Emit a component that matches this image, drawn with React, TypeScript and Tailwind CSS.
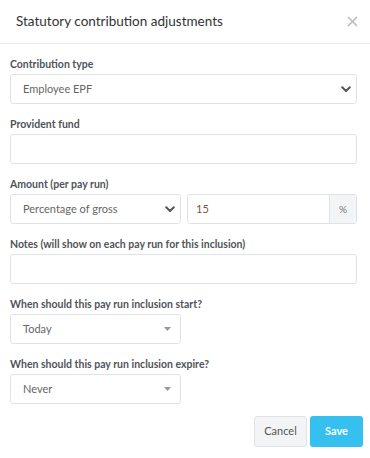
import React from "react";

const font = { fontFamily: "Lato, 'Open Sans', Arial, sans-serif" };

function Chevron() {
  return (
    <svg width="10" height="7" viewBox="0 0 10 7" className="shrink-0">
      <path d="M1.2 1.2 L5 5 L8.8 1.2" fill="none" stroke="#555" strokeWidth="2" strokeLinecap="round" strokeLinejoin="round" />
    </svg>
  );
}

function Caret() {
  return (
    <svg width="7" height="4" viewBox="0 0 7 4" className="shrink-0">
      <path d="M0 0 L7 0 L3.5 4 Z" fill="#999" />
    </svg>
  );
}

function Label({ children }: { children: React.ReactNode }) {
  return <div className="h-5 text-[10.5px] font-bold leading-5 text-[#50545a]">{children}</div>;
}

function SelectBox({ value, width, caret }: { value: string; width: string; caret?: boolean }) {
  return (
    <div
      className={`flex h-[30px] ${width} items-center justify-between rounded-[3px] border border-[#dfe3e8] bg-white pl-[12px] ${
        caret ? "pr-[9px]" : "pr-[5px]"
      } text-[11px] text-[#666]`}
    >
      <span>{value}</span>
      {caret ? <Caret /> : <Chevron />}
    </div>
  );
}

function TextBox() {
  return <div className="h-[30px] w-full rounded-[3px] border border-[#dfe3e8] bg-white" />;
}

export default function App() {
  return (
    <div className="h-[458px] w-[370px] bg-white" style={font}>
      <div className="flex h-[44px] items-center justify-between border-b border-[#e8eaed] pl-4 pr-[12px]">
        <span className="text-[13.5px] text-[#333]">Statutory contribution adjustments</span>
        <svg width="11" height="11" viewBox="0 0 11 11">
          <path d="M1 1 L10 10 M10 1 L1 10" stroke="#bbb" strokeWidth="1.6" />
        </svg>
      </div>

      <div className="flex flex-col gap-[10px] pl-[10px] pr-[13px] pt-[10px]">
        <div>
          <Label>Contribution type</Label>
          <SelectBox value="Employee EPF" width="w-full" />
        </div>

        <div>
          <Label>Provident fund</Label>
          <TextBox />
        </div>

        <div>
          <Label>Amount (per pay run)</Label>
          <div className="flex gap-[6px]">
            <SelectBox value="Percentage of gross" width="w-[171px]" />
            <div className="flex h-[30px] flex-1 rounded-[3px] border border-[#dfe3e8] bg-white">
              <div className="flex flex-1 items-center pl-[8px] text-[11px] text-[#7a5a3a]">15</div>
              <div className="flex w-[27px] items-center justify-center border-l border-[#dfe3e8] bg-[#f3f4f6] text-[10px] text-[#777]">
                %
              </div>
            </div>
          </div>
        </div>

        <div>
          <Label>Notes (will show on each pay run for this inclusion)</Label>
          <TextBox />
        </div>

        <div>
          <Label>When should this pay run inclusion start?</Label>
          <SelectBox value="Today" width="w-[171px]" caret />
        </div>

        <div>
          <Label>When should this pay run inclusion expire?</Label>
          <SelectBox value="Never" width="w-[171px]" caret />
        </div>

        <div className="mt-[2px] flex justify-end gap-[3px]">
          <button className="h-[31px] w-[53px] rounded-[3px] border border-[#dfe3e8] bg-[#f3f4f6] text-[11px] text-[#555]">
            Cancel
          </button>
          <button className="mr-[-6px] h-[31px] w-[53px] rounded-[3px] bg-[#36c0ef] text-[11px] font-bold text-white">
            Save
          </button>
        </div>
      </div>
    </div>
  );
}
